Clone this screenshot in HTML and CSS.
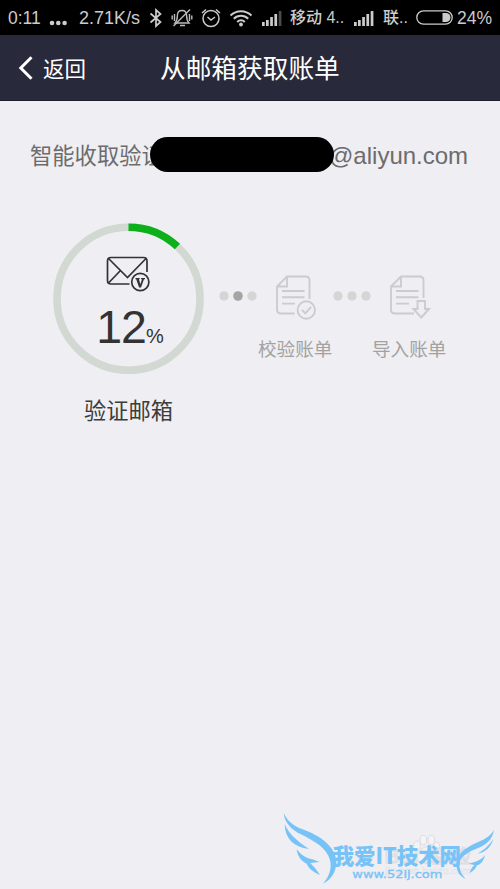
FILE: index.html
```html
<!DOCTYPE html>
<html lang="zh-CN">
<head>
<meta charset="utf-8">
<title>从邮箱获取账单</title>
<link rel="stylesheet" href="styles.css">
</head>
<body>
<div class="status">
  <span class="time">0:11</span>
  <svg class="more" width="20" height="8" viewBox="0 0 20 8"><g fill="#ccc"><circle cx="3" cy="4" r="2.3"/><circle cx="9.3" cy="4" r="2.3"/><circle cx="15.6" cy="4" r="2.3"/></g></svg>
  <span class="speed">2.71K/s</span>
  <svg class="bt" width="14" height="20" viewBox="0 0 14 20"><path d="M1.500 5.500 11.500 14 7 18V2L11.500 6 1.500 14.500" fill="none" stroke="#ccc" stroke-width="1.700"/></svg>
  <svg class="mute" width="22" height="20" viewBox="0 0 22 20"><g fill="none" stroke="#bbb" stroke-width="1.4"><path d="M5 15h13c-2-2-2.400-4-2.400-7.500C15.600 4.500 14 2.500 11 2.500S6.400 4.500 6.400 7.500C6.400 11 6 13 4 15zM9 17.500h5M3.500 6v7M1.200 7.500v4M18.500 6v7M20.800 7.500v4"/><path d="M2.500 18 19 1.500"/></g></svg>
  <svg class="alarm" width="20" height="20" viewBox="0 0 20 20"><g fill="none" stroke="#ccc" stroke-width="1.500"><circle cx="10" cy="10.500" r="8"/><path d="M6.500 9 10 12l4-3M1 5l4-3.500M19 5l-4-3.500"/></g></svg>
  <svg class="wifi" width="24" height="18" viewBox="0 0 24 18"><g fill="none" stroke="#ccc" stroke-width="2"><path d="M1.500 6.500C7.500.8 16.500.8 22.500 6.500M4.800 9.800c4-4 10.400-4 14.400 0M8.200 13c2.200-2.200 5.400-2.200 7.600 0"/></g><circle cx="12" cy="15.500" r="1.900" fill="#ccc"/></svg>
  <svg class="signal first" width="20" height="16" viewBox="0 0 20 16"><path d="M0 12h2.700v4H0zM4 10h2.700v6H4zM8.200 7h2.700v9H8.200zM12.400 4h2.700v12h-2.700z" fill="#ccc"/><path d="M16.700 1h2.700v15h-2.700z" fill="#4c4c4c"/></svg>
  <span class="carrier-a">移动 4..</span>
  <svg class="signal second" width="20" height="16" viewBox="0 0 20 16"><path d="M0 12h2.700v4H0zM4 10h2.700v6H4zM8.200 7h2.700v9H8.200zM12.400 4h2.700v12h-2.700zM16.700 1h2.700v15h-2.700z" fill="#ccc"/></svg>
  <span class="carrier-b">联..</span>
  <svg class="battery" width="37" height="15" viewBox="0 0 37 15"><rect x=".8" y=".8" width="35.400" height="13.400" rx="6.700" fill="none" stroke="#ccc" stroke-width="1.300"/><path d="M26.500 3h3.500a4.500 4.500 0 0 1 0 9h-3.500z" fill="#ccc"/></svg>
  <span class="percent">24%</span>
</div>

<header class="header">
  <svg class="chevron" width="16" height="24" viewBox="0 0 16 24"><path d="M13.500 1.300 2.800 12l10.700 10.700" fill="none" stroke="#fff" stroke-width="3"/></svg>
  <span class="back">返回</span>
  <h1 class="title">从邮箱获取账单</h1>
</header>

<p class="account"><span class="account-text">智能收取验证</span><span class="redaction"></span><span class="domain">@aliyun.com</span></p>

<main class="steps">
  <section class="current">
    <div class="ring">
      <svg class="ring-track" width="152" height="152" viewBox="0 0 152 152"><circle cx="76.500" cy="75.700" r="71.500" fill="none" stroke="#d2d8d2" stroke-width="7.600"/><circle cx="76.500" cy="75.700" r="71.500" fill="none" stroke="#0bb01b" stroke-width="7.600" pathLength="100" stroke-dasharray="12 88" transform="rotate(-90 76.500 75.700)"/></svg>
      <svg class="mail" width="44" height="36" viewBox="0 0 44 36"><g fill="none" stroke="#333" stroke-width="1.700"><path d="M23.500 28H5q-3.500 0-3.500-3.500V5Q1.500 1.500 5 1.500h32.500Q41 1.500 41 5v11M2.500 2.500 21.500 21.500 40 2.500M2.500 27 14 15"/><circle cx="34.300" cy="26" r="8.600"/></g><path d="M29.500 22h4.200v1.200l-.8.1 1.500 5 1.600-5-.9-.1V22h3.900v1.300h-1l-3 8.200h-1.900l-2.900-8.200h-.7z" fill="#333"/></svg>
      <div class="value"><span class="number">12</span><span class="unit">%</span></div>
    </div>
    <div class="current-label">验证邮箱</div>
  </section>
  <svg class="dots" width="38" height="10" viewBox="0 0 38 10"><g fill="#d5d5d5"><circle cx="5" cy="5" r="4.700"/><circle cx="33" cy="5" r="4.700"/></g><circle cx="19" cy="5" r="4.800" fill="#a5a5a5"/></svg>
  <section class="step">
    <svg class="doc" width="42" height="46" viewBox="0 0 42 46"><g fill="none" stroke="#ccc" stroke-width="1.900"><path d="M19.500 38.500H6q-4 0-4-4V11.500L12 1.500h18.500q4 0 4 4V24M3 11.500h9v-10M7 16h22.500M7 22.300h22.500M7 28.600h13"/><circle cx="31.300" cy="35" r="8.700"/><path d="m27 35 3.300 3.300 5.700-6.300"/></g></svg>
    <div class="step-label">校验账单</div>
  </section>
  <svg class="dots next" width="38" height="10" viewBox="0 0 38 10"><g fill="#d5d5d5"><circle cx="5" cy="5" r="4.700"/><circle cx="19" cy="5" r="4.700"/><circle cx="33" cy="5" r="4.700"/></g></svg>
  <section class="step last">
    <svg class="doc" width="42" height="46" viewBox="0 0 42 46"><g fill="none" stroke="#ccc" stroke-width="1.900"><path d="M25 38.500H6q-4 0-4-4V11.500L12 1.500h18.500q4 0 4 4V23M3 11.500h9v-10M7 16h22.500M7 22.300h22.500M7 28.600h13"/><path d="M28.500 26h7.500v8h4l-7.800 8.500L24.500 34h4z"/></g></svg>
    <div class="step-label">导入账单</div>
  </section>
</main>

<svg class="watermark" width="230" height="109" viewBox="0 0 690 327">
  <g fill="#f4f4f7" stroke="#dddde1" stroke-width="3">
    <ellipse cx="441" cy="197" rx="10" ry="14"/><ellipse cx="460" cy="180" rx="10" ry="14"/><ellipse cx="484" cy="180" rx="10" ry="14"/><ellipse cx="500" cy="200" rx="9" ry="13"/><path d="M470 200c15 0 36 25 29 39-8 14-48 14-57 0-5-14 14-39 28-39z"/>
    <text class="brand" x="342" y="248" font-size="56" textLength="260" lengthAdjust="spacingAndGlyphs">Bai 经验</text>
    <text class="brand" x="345" y="281" font-size="25" stroke-width="1" textLength="260" lengthAdjust="spacingAndGlyphs">jingyan.baidu.com</text>
  </g>
  <g fill="#77c3f7">
    <path d="M41 98c10 24 29 40 57 50 49 17 101 53 101 98 0 30-16 53-40 65 20-22 27-47 21-71-10-36-44-55-87-77-30-15-50-36-52-65z"/>
    <path d="M44 132c10 25 30 46 73 75-47-6-72-31-73-75z"/>
    <path d="M80 207c12 17 27 27 47 31l22 8-28 3c9 10 20 21 29 36-28-13-35-23-40-34-18-9-28-24-30-44z"/>
    <path d="M672 150c-5 30-24 46-60 59-29 12-46 28-44 47 1 17 9 32 21 42-21-9-31-26-29-49 2-29 25-44 53-58 28-11 48-22 59-41z"/>
    <path d="M670 177c-8 26-23 39-48 44 22-12 35-25 48-44zM645 225c-4 18-13 29-24 31-4 11-11 18-23 23 5-11 9-18 15-24l-17-4 20-6c13-4 22-10 29-20z"/>
    <text class="site" x="188" y="252" font-size="66" textLength="385" lengthAdjust="spacingAndGlyphs">我爱IT技术网</text>
    <text class="url" x="247" y="293" font-size="33" textLength="270" lengthAdjust="spacingAndGlyphs">www.52ij.com</text>
  </g>
</svg>
</body>
</html>
```
FILE: styles.css
```css
* { box-sizing: border-box; }
body {
  position: relative;
  margin: 0;
  width: 500px;
  height: 889px;
  overflow: hidden;
  background: #efeef3;
  font-family: "Liberation Sans", "Noto Sans CJK SC", sans-serif;
}
svg { display: block; flex: none; }
.status {
  display: flex;
  align-items: center;
  height: 35px;
  padding-left: 8px;
  background: #000;
  color: #ccc;
  font-size: 17.5px;
  line-height: 36px;
  white-space: nowrap;
}
.status span { flex: none; height: 35px; }
.time { width: 34px; }
.more { margin: 10px 0 0 7px; }
.speed { width: 63px; margin-left: 10px; font-size: 18px; }
.bt { margin-left: 7px; }
.mute { margin-left: 8px; }
.alarm { margin-left: 8px; }
.wifi { margin-left: 8px; }
.signal.first { margin-left: 9px; }
.carrier-a { width: 56px; margin-left: 8px; font-size: 16px; font-weight: 500; }
.signal.second { margin-left: 8px; }
.carrier-b { width: 24px; margin-left: 9px; font-size: 16px; font-weight: 500; }
.battery { margin-left: 9px; }
.percent { margin-left: 4px; }
.header {
  display: flex;
  align-items: center;
  height: 66px;
  padding-left: 18px;
  background: #282a3b;
  border-bottom: 1px solid #1d1f2e;
  color: #fff;
}
.back { width: 44px; margin-left: 9px; font-size: 21.5px; }
.title { margin: 2px 0 0 73px; font-size: 25.7px; line-height: 38px; font-weight: 400; }
.account {
  display: flex;
  align-items: center;
  height: 35px;
  margin: 36px 0 0;
  padding-left: 30px;
  color: #6c6c6c;
  white-space: nowrap;
}
.account-text { width: 120px; margin-top: 4px; font-size: 22.3px; line-height: 36px; }
.redaction { z-index: 1; width: 184px; height: 35px; border-radius: 17.5px; background: #000; }
.domain { margin: 2px 0 0 -5px; font-size: 24px; }
.steps { display: flex; align-items: flex-start; padding: 51px 0 0 52px; }
.current { width: 152px; }
.ring {
  display: grid;
  justify-items: center;
  align-content: start;
  height: 152px;
  padding-top: 33px;
}
.ring-track { grid-area: 1 / 1; margin-top: -33px; height: 152px; margin-bottom: -152px; }
.mail { grid-area: 1 / 1; }
.value {
  display: flex;
  align-items: baseline;
  height: 52px;
  margin: 9px 0 0 4px;
  color: #333;
  line-height: 52px;
}
.number { font-size: 46.5px; letter-spacing: -1px; }
.unit { font-size: 20px; }
.current-label { margin-top: 20px; padding-left: 1px; color: #3c3c3c; font-size: 22.3px; line-height: 34px; text-align: center; }
.dots { margin: 68px 0 0 15px; }
.step { width: 76px; }
.dots.next { margin-left: 0; }
.step .doc { margin: 52px 0 0 18px; }
.step-label { margin: 15px 0 0 1px; color: #a2a2a2; font-size: 18.6px; line-height: 28px; white-space: nowrap; }
.watermark { position: absolute; left: 270px; top: 780px; }
.brand { font-family: "Noto Sans CJK SC", sans-serif; font-weight: 400; }
.site { font-family: "Noto Sans CJK SC", sans-serif; font-weight: 900; }
.url { font-family: "DejaVu Sans", sans-serif; font-weight: 400; stroke: #77c3f7; stroke-width: 1; }
```
